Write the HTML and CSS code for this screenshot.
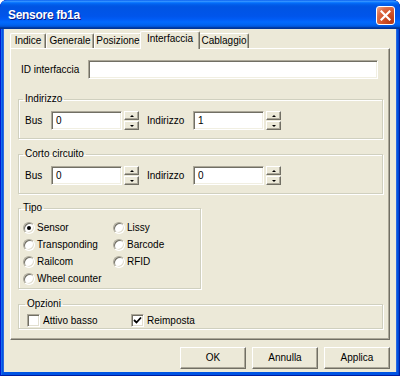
FILE: index.html
```
<!DOCTYPE html>
<html lang="it">
<head>
<meta charset="utf-8">
<title>Sensore fb1a</title>
<link rel="stylesheet" href="styles.css">
</head>
<body>
<div class="window">
  <div class="titlebar">
    <span class="title">Sensore fb1a</span>
    <div class="close">
      <svg width="11" height="11" viewBox="0 0 11 11"><path d="M1.5 1.5 L9.5 9.5 M9.5 1.5 L1.5 9.5" stroke="#fff" stroke-width="2.2" stroke-linecap="square"/></svg>
    </div>
  </div>
  <div class="client">
    <div class="tabs">
      <div class="tab t1">Indice</div>
      <div class="tab t2">Generale</div>
      <div class="tab t3">Posizione</div>
      <div class="tab t4 active">Interfaccia</div>
      <div class="tab t5">Cablaggio</div>
    </div>
    <div class="panel">
      <div class="idrow">
        <span class="idlabel">ID interfaccia</span>
        <div class="edit idedit"></div>
      </div>

      <fieldset class="group wide g1">
        <legend>Indirizzo</legend>
        <div class="addrrow">
          <span class="lbl lbus">Bus</span>
          <div class="edit num">0</div>
          <div class="spin"><div class="sb up"><i></i></div><div class="sb down"><i></i></div></div>
          <span class="lbl laddr">Indirizzo</span>
          <div class="edit num">1</div>
          <div class="spin"><div class="sb up"><i></i></div><div class="sb down"><i></i></div></div>
        </div>
      </fieldset>

      <fieldset class="group wide g2">
        <legend>Corto circuito</legend>
        <div class="addrrow">
          <span class="lbl lbus">Bus</span>
          <div class="edit num">0</div>
          <div class="spin"><div class="sb up"><i></i></div><div class="sb down"><i></i></div></div>
          <span class="lbl laddr">Indirizzo</span>
          <div class="edit num">0</div>
          <div class="spin"><div class="sb up"><i></i></div><div class="sb down"><i></i></div></div>
        </div>
      </fieldset>

      <fieldset class="group tipo">
        <legend>Tipo</legend>
        <div class="radios">
          <div class="opt"><span class="radio on"></span>Sensor</div>
          <div class="opt"><span class="radio"></span>Lissy</div>
          <div class="opt"><span class="radio"></span>Transponding</div>
          <div class="opt"><span class="radio"></span>Barcode</div>
          <div class="opt"><span class="radio"></span>Railcom</div>
          <div class="opt"><span class="radio"></span>RFID</div>
          <div class="opt"><span class="radio"></span>Wheel counter</div>
        </div>
      </fieldset>

      <fieldset class="group wide opz">
        <legend>Opzioni</legend>
        <div class="checks">
          <div class="chk c1"><span class="box"></span>Attivo basso</div>
          <div class="chk"><span class="box"><svg width="9" height="9" viewBox="0 0 9 9"><path d="M1 4 L3.5 6.5 L8 1.5" fill="none" stroke="#000" stroke-width="1.8"/></svg></span>Reimposta</div>
        </div>
      </fieldset>
    </div>
    <div class="buttons">
      <div class="btn">OK</div>
      <div class="btn">Annulla</div>
      <div class="btn">Applica</div>
    </div>
  </div>
</div>
</body>
</html>
```
FILE: styles.css
```
* { box-sizing: border-box; }
html, body { margin: 0; padding: 0; }
body {
  width: 400px;
  height: 376px;
  overflow: hidden;
  font-family: "Liberation Sans", Arial, sans-serif;
  font-size: 10px;
  color: #000;
  background: #fff;
}
.window {
  width: 400px;
  height: 376px;
  display: flex;
  flex-direction: column;
  background: #0054E3;
  border-radius: 7px 7px 0 0;
  box-shadow: inset 1px 0 0 #0019CF, inset -1px 0 0 #001DA0, inset 0 -1px 0 #001DA0, inset 2px 0 0 #166AEE, inset -2px 0 0 #0046D0;
  overflow: hidden;
}
.titlebar {
  height: 29px;
  flex: none;
  display: flex;
  align-items: center;
  justify-content: space-between;
  padding: 0 5px 0 8px;
  border-radius: 7px 7px 0 0;
  background: linear-gradient(180deg, #0058EE 0%, #3A93FF 4%, #288EFF 6%, #127DFF 8%, #036FFC 10%, #0262EE 14%, #0057E5 20%, #0054E3 24%, #0055EB 56%, #005BF5 66%, #026AFE 76%, #0062EF 86%, #0052D6 92%, #0040AB 94%, #003092 100%);
}
.title {
  color: #fff;
  font-weight: bold;
  font-size: 12px;
  letter-spacing: -0.3px;
  text-shadow: 1px 1px 0 #0A1883;
  margin-top: 1px;
}
.close {
  width: 19px;
  height: 19px;
  margin-top: 1px;
  border: 1px solid #fff;
  border-radius: 3px;
  display: flex;
  align-items: center;
  justify-content: center;
  background: radial-gradient(circle at 85% 85%, #B83A14 0%, #D2532A 45%, #DE6D48 70%, #EFA184 95%);
}
.client {
  flex: 1;
  margin: 0 4px 4px 4px;
  background: #ECE9D8;
  padding: 2px 6px 0 6px;
  display: flex;
  flex-direction: column;
  box-shadow: -1px 0 0 #2A67E0, 1px 0 0 #2A67E0;
}
.tabs {
  display: flex;
  align-items: flex-end;
  height: 17px;
}
.tab {
  height: 15px;
  border-top: 1px solid #fff;
  border-left: 1px solid #fff;
  border-right: 1px solid #716F64;
  box-shadow: inset -1px 0 0 #ACA899;
  border-radius: 2px 2px 0 0;
  text-align: center;
  line-height: 13px;
  background: #ECE9D8;
  white-space: nowrap;
}
.t1 { width: 36px; }
.t2 { width: 48px; }
.t3 { width: 48px; }
.t4 { width: 58px; }
.t5 { width: 50px; }
.tab.active {
  height: 18px;
  width: 60px;
  margin: 0 -1px -1px -2px;
  position: relative;
  z-index: 1;
  line-height: 13px;
}
.panel {
  height: 292px;
  flex: none;
  border-top: 1px solid #fff;
  border-left: 1px solid #fff;
  border-right: 1px solid #716F64;
  border-bottom: 1px solid #716F64;
  box-shadow: inset -1px -1px 0 #ACA899;
  padding: 11px 7px 0 7px;
}
.idrow {
  display: flex;
  align-items: center;
  height: 19px;
}
.idlabel {
  width: 70px;
  padding-left: 3px;
}
.edit {
  height: 19px;
  background: #fff;
  border: 1px solid;
  border-color: #ACA899 #fff #fff #ACA899;
  box-shadow: inset 1px 1px 0 #716F64, inset -1px -1px 0 #F1EFE2;
  padding-left: 4px;
  line-height: 17px;
}
.idedit { width: 290px; }
.group {
  margin: 0;
  padding: 0 6px;
  min-width: 0;
  border: 1px solid #D0D0BF;
  box-shadow: inset 1px 1px 0 #fff, 1px 1px 0 #fff;
}
.group legend {
  padding: 0 2px;
  margin-left: -2px;
  line-height: 12px;
}
.wide { width: 365px; }
.g1 { margin-top: 14px; padding-top: 6px; padding-bottom: 8px; }
.g2 { margin-top: 9px; padding-top: 6px; padding-bottom: 8px; }
.addrrow {
  display: flex;
  align-items: center;
  height: 19px;
}
.lbl { flex: none; }
.lbus { width: 26px; }
.laddr { width: 46px; margin-left: 8px; }
.num { width: 71px; }
.spin {
  width: 15px;
  height: 19px;
  margin-left: 2px;
  display: flex;
  flex-direction: column;
  justify-content: space-between;
}
.sb {
  height: 9px;
  border: 1px solid;
  border-color: #fff #716F64 #716F64 #fff;
  box-shadow: inset -1px -1px 0 #ACA899;
  background: #ECE9D8;
  display: flex;
  align-items: center;
  justify-content: center;
}
.sb i {
  width: 0;
  height: 0;
  border-left: 2px solid transparent;
  border-right: 2px solid transparent;
}
.up i { border-bottom: 2px solid #000; }
.down i { border-top: 2px solid #000; }
.tipo {
  width: 183px;
  margin-top: 8px;
  padding: 5px 4px 1px 4px;
}
.radios {
  display: grid;
  grid-template-columns: 90px 1fr;
  grid-auto-rows: 17px;
}
.opt {
  display: flex;
  align-items: center;
}
.radio {
  width: 12px;
  height: 12px;
  border-radius: 50%;
  margin-right: 2px;
  background: #fff;
  border: 1px solid;
  border-color: #ACA899 #fff #fff #ACA899;
  box-shadow: inset 1px 1px 0 #716F64, inset -1px -1px 0 #E2DFD0;
  display: flex;
  align-items: center;
  justify-content: center;
}
.radio.on::after {
  content: "";
  width: 4px;
  height: 4px;
  border-radius: 50%;
  background: #000;
}
.opz {
  margin-top: 9px;
  padding: 3px 8px 0 8px;
}
.checks {
  display: flex;
  align-items: center;
  height: 15px;
}
.chk {
  display: flex;
  align-items: center;
}
.c1 { width: 104px; }
.box {
  width: 13px;
  height: 13px;
  margin-right: 3px;
  background: #fff;
  border: 1px solid;
  border-color: #ACA899 #fff #fff #ACA899;
  box-shadow: inset 1px 1px 0 #716F64, inset -1px -1px 0 #E2DFD0;
  display: flex;
  align-items: center;
  justify-content: center;
}
.buttons {
  display: flex;
  justify-content: flex-end;
  gap: 6px;
  margin-top: 7px;
}
.btn {
  width: 66px;
  height: 22px;
  border: 1px solid;
  border-color: #fff #716F64 #716F64 #fff;
  box-shadow: inset -1px -1px 0 #ACA899;
  text-align: center;
  line-height: 19px;
}
```
